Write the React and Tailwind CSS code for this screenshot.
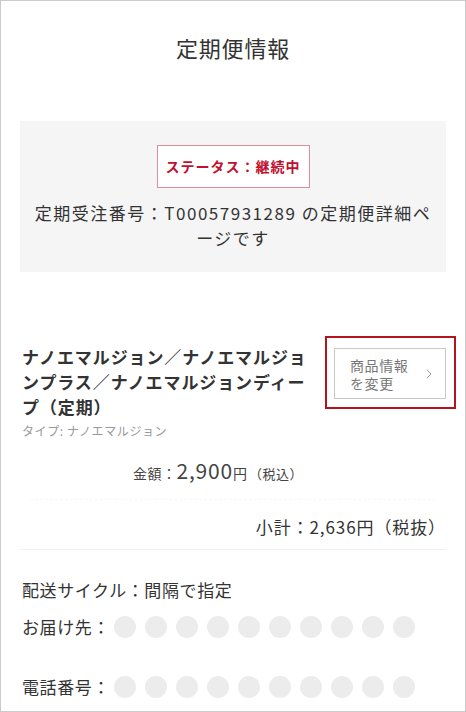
import { ChevronRight } from "lucide-react";

const dots = Array.from({ length: 10 });

// masked personal data: a row of grey dots
function Masked() {
  return (
    <div className="flex gap-[9px] ml-[4px]">
      {dots.map((_, i) => (
        <span key={i} className="w-[22px] h-[22px] rounded-full bg-[#ececec]" />
      ))}
    </div>
  );
}

export default function App() {
  return (
    <div className="min-h-screen bg-white">
      <div className="w-[466px] h-[712px] overflow-hidden border border-[#cbcbcb] bg-white text-[#333] font-['Noto_Sans_CJK_JP','Noto_Sans',sans-serif]">
        {/* Heading */}
        <h1 className="pt-[30px] text-center text-[22px] leading-[33px] tracking-[0.8px]">
          定期便情報
        </h1>

        <div className="px-[19px]">
          {/* Status box */}
          <section className="mt-[57px] flex flex-col items-center bg-[#f5f5f5] pt-[24px] pb-[22px]">
            <div className="flex h-[43px] items-center border border-[#e28b9b] bg-white px-[8px] text-[14px] font-bold tracking-[1px] text-[#c0102d]">
              ステータス：継続中
            </div>
            <p className="mt-[12px] text-center text-[17px] leading-[25px] tracking-[1.5px]">
              定期受注番号：T00057931289 の定期便詳細ペ
              <br />
              ージです
            </p>
          </section>

          {/* Product */}
          <div className="mt-[72px] flex items-start justify-between">
            <div className="pl-[2px]">
              <h2 className="text-[17px] font-bold leading-[25px] tracking-[0.9px]">
                ナノエマルジョン／ナノエマルジョ
                <br />
                ンプラス／ナノエマルジョンディー
                <br />
                プ（定期）
              </h2>
              <p className="mt-[3px] text-[12px] leading-[18px] tracking-[0.6px] text-[#999]">
                タイプ: ナノエマルジョン
              </p>
            </div>

            <div className="relative mt-[4px]">
              <button className="flex h-[51px] w-[112px] items-center justify-between border border-[#c9c9c9] bg-white pl-[15px] pr-[8px] text-left text-[14px] leading-[18px] tracking-[0.6px] text-[#777]">
                <span>
                  商品情報
                  <br />
                  を変更
                </span>
                <ChevronRight size={16} strokeWidth={1.3} className="text-[#888]" />
              </button>
              <span className="pointer-events-none absolute -left-[9px] -right-[10px] -top-[12px] -bottom-[10px] border-2 border-[#b3141d]" />
            </div>
          </div>

          {/* Price */}
          <div className="mt-[15px] flex items-baseline pl-[113px] leading-[30px] text-[#444]">
            <span className="text-[14px] tracking-[0.5px]">金額：</span>
            <span className="text-[21px] tracking-[0.8px]">2,900</span>
            <span className="text-[14px]">円</span>
            <span className="text-[13px] tracking-[0.5px] ml-[2px]">（税込）</span>
          </div>
          <div className="mx-[10px] mt-[10px] border-t border-dashed border-[#f7f7f7]" />

          <p className="mt-[14px] text-right text-[17px] leading-[25px] tracking-[0.9px]">
            小計：2,636円（税抜）
          </p>
          <div className="mt-[10px] border-t border-[#f0f0f0]" />

          {/* Delivery */}
          <p className="mt-[28px] pl-[2px] text-[17px] leading-[24px] tracking-[0.6px]">
            配送サイクル：間隔で指定
          </p>
          <div className="mt-[14px] flex items-center pl-[2px]">
            <span className="text-[17px] leading-[22px] tracking-[0.6px]">お届け先：</span>
            <Masked />
          </div>
          <div className="mt-[38px] flex items-center pl-[2px]">
            <span className="text-[17px] leading-[22px] tracking-[0.6px]">電話番号：</span>
            <Masked />
          </div>
        </div>
      </div>
    </div>
  );
}
